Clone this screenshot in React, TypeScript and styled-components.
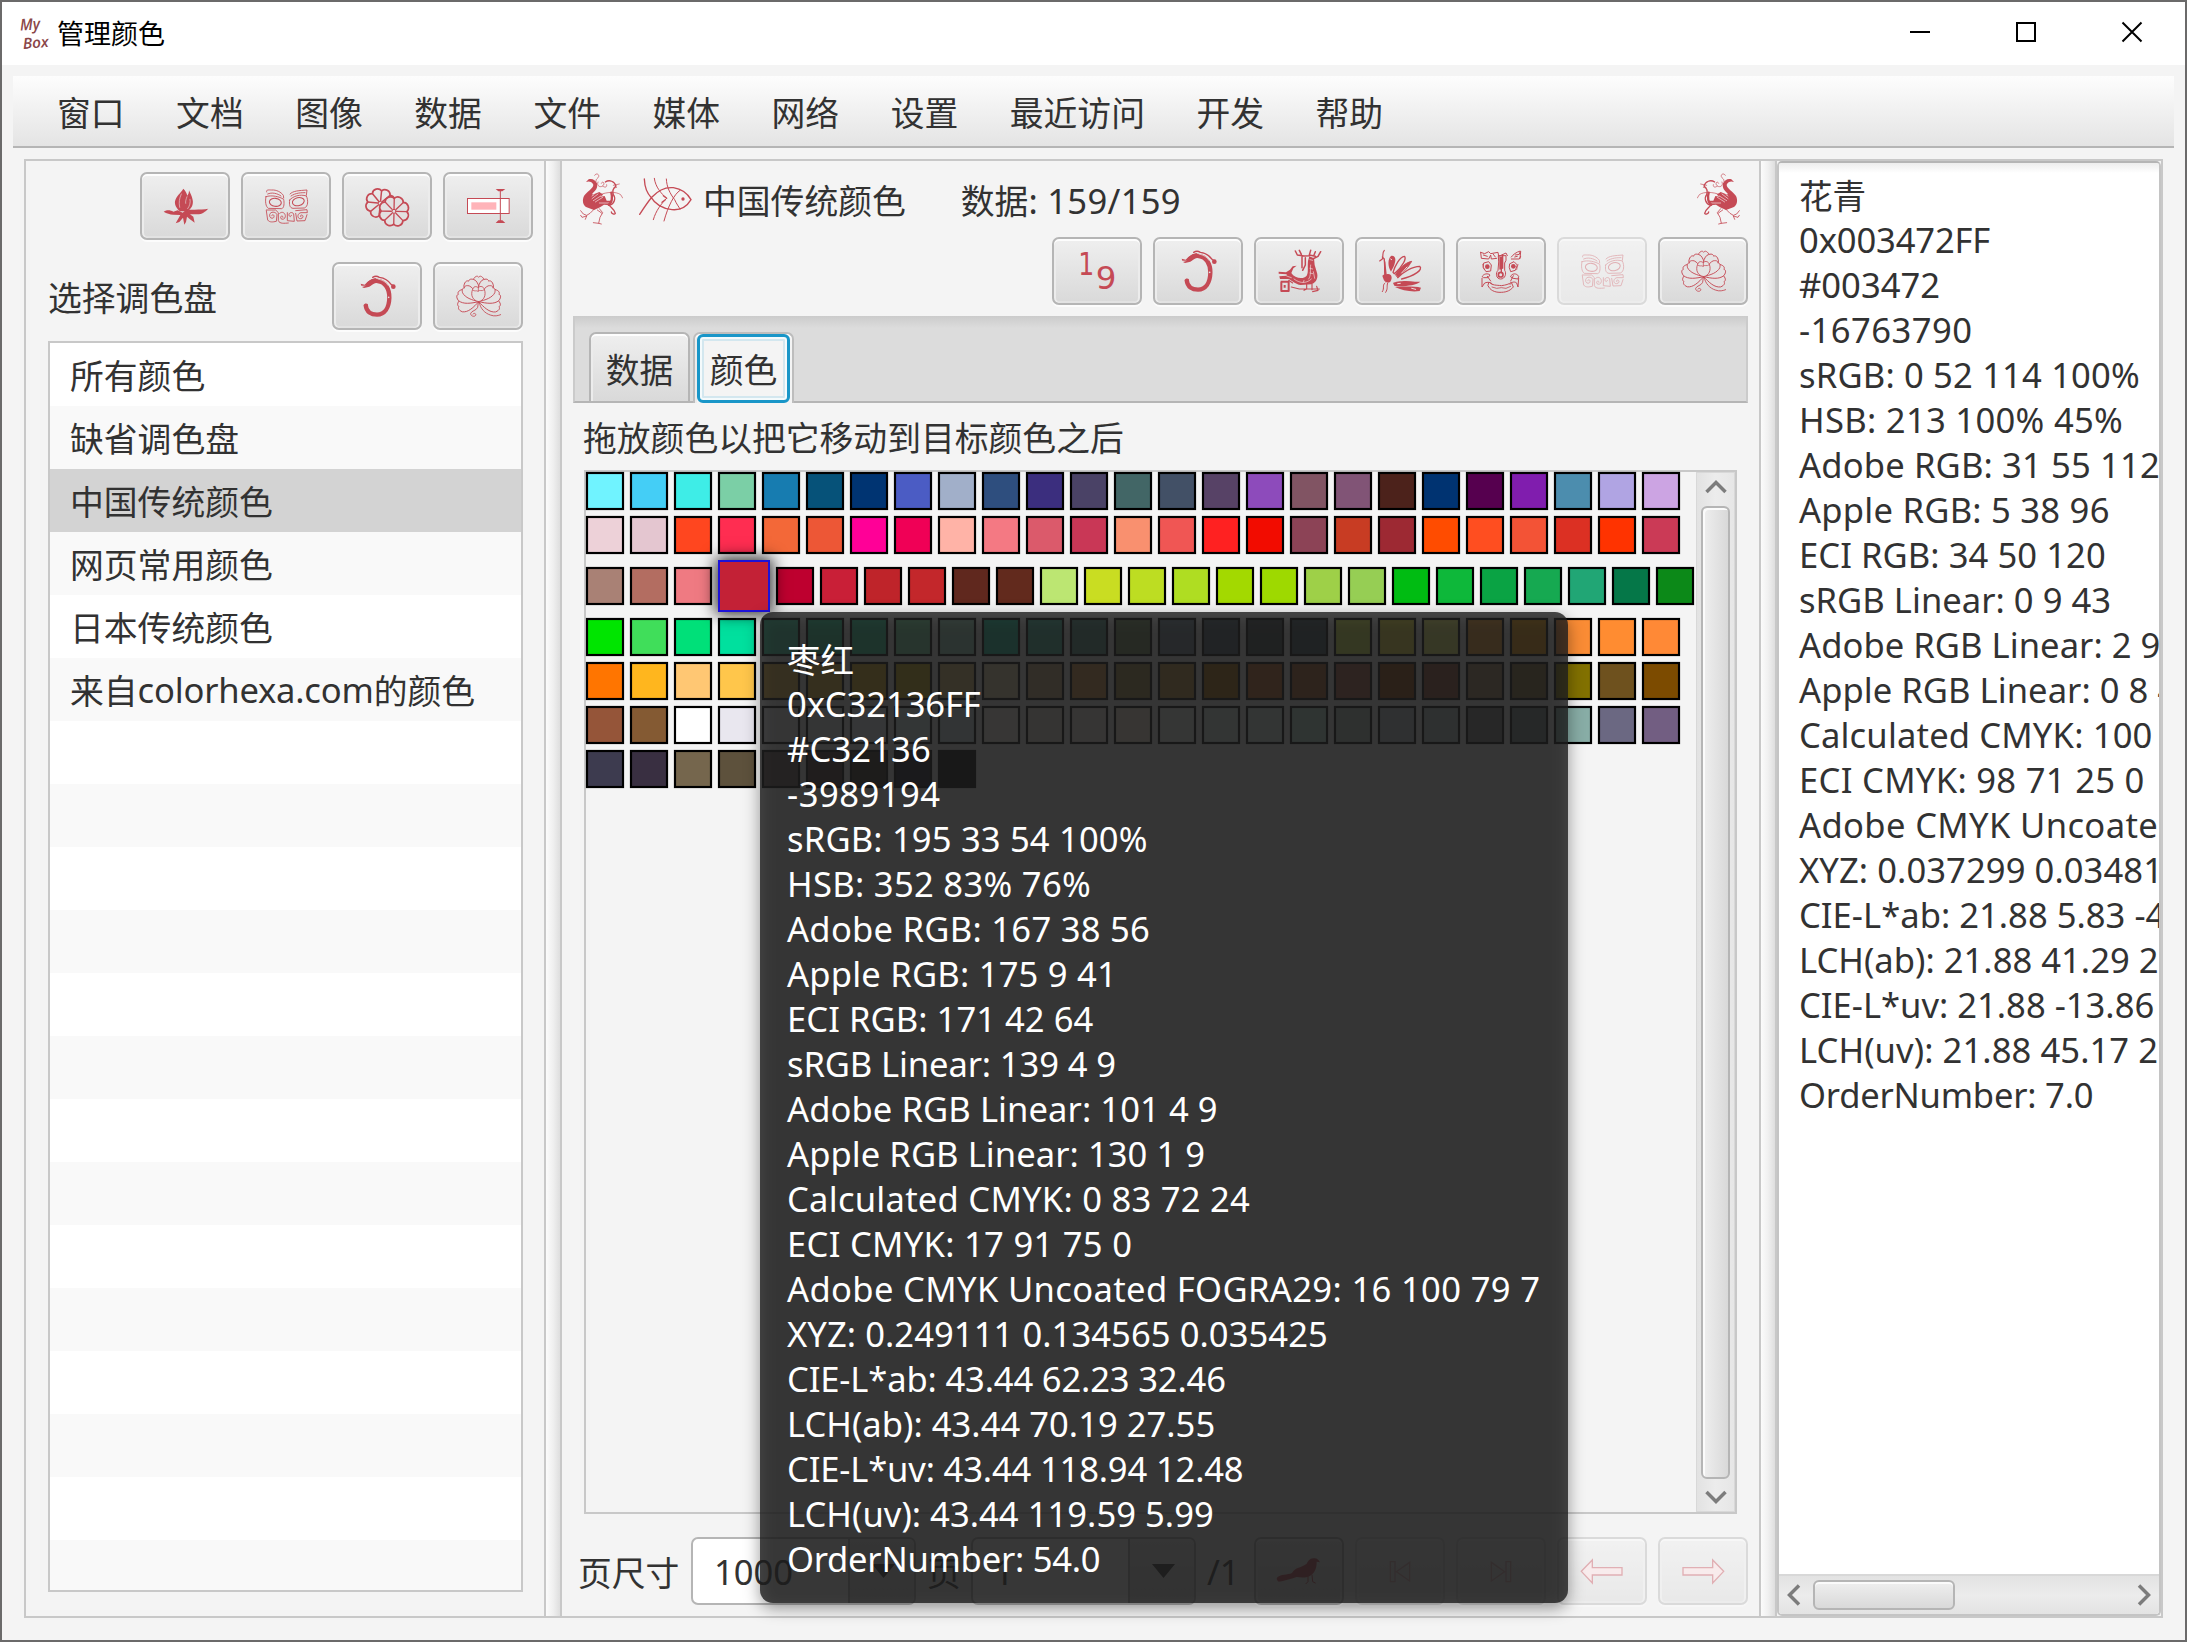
import React from "react";
import styled, { createGlobalStyle, css } from "styled-components";

const RED = "#c54a55";

const GlobalStyle = createGlobalStyle`
  * { box-sizing: border-box; }
  html, body { margin: 0; padding: 0; background: #f4f4f4; }
  body {
    font-family: "Noto Sans", "Noto Sans CJK SC", sans-serif;
    font-size: 33.8px;
    color: #323232;
    overflow: hidden;
  }
`;

/* ---------- window frame ---------- */

const Window = styled.div`
  position: relative;
  width: 2187px;
  height: 1642px;
  border: 2px solid #6b6a6a;
  background: #f4f4f4;
  display: flex;
  flex-direction: column;
  overflow: hidden;
`;

const TitleBar = styled.header`
  height: 63px;
  background: #fff;
  display: flex;
  align-items: center;
  padding: 0 41px 0 17px;
  flex: none;
`;

const Title = styled.h1`
  margin: -3px 0 0 4px;
  font-size: 27px;
  font-weight: 400;
  color: #000;
  flex: 1;
`;

const WindowControls = styled.div`
  display: flex;
  gap: 82px;
  margin-top: -4px;
`;

const MenuBar = styled.nav`
  margin: 11px 11px 0;
  height: 72px;
  flex: none;
  display: flex;
  align-items: center;
  gap: 51.5px;
  padding: 1px 44px 0;
  background: linear-gradient(#fdfdfd, #e4e4e4);
  border-bottom: 2px solid #b5b5b5;
`;

const MenuItem = styled.span`
  white-space: nowrap;
`;

const SplitPane = styled.main`
  margin: 11px 22px 22px;
  flex: 1;
  min-height: 0;
  display: flex;
  border: 2px solid #c8c8c8;
`;

const Divider = styled.div`
  width: 18px;
  flex: none;
  border-left: 2px solid #c8c8c8;
  border-right: 2px solid #c8c8c8;
  background: linear-gradient(90deg, #fbfbfb, #f0f0f0 50%, #dedede);
`;

/* ---------- shared controls ---------- */

const Button = styled.button<{ $disabled?: boolean }>`
  width: 90px;
  height: 68px;
  flex: none;
  padding: 0;
  border: 2px solid #b5b5b5;
  border-radius: 7px;
  background: linear-gradient(#efefef, #d9d9d9);
  box-shadow: inset 0 2px 0 #fdfdfd, inset 2px 0 0 #ececec, inset -2px 0 0 #ececec,
    inset 0 -2px 0 #e2e2e2, 0 2px 0 #fcfcfc;
  display: block;
  opacity: ${(p) => (p.$disabled ? 0.4 : 1)};
  svg {
    display: block;
    width: 90px;
    height: 68px;
    margin: -2px;
  }
`;

const Toolbar = styled.div`
  display: flex;
  gap: 11px;
  align-items: center;
`;

const Latin = styled.span<{ $ls?: number }>`
  font-size: 34.6px;
  letter-spacing: ${(p) => p.$ls ?? 0}px;
`;

/* ---------- palettes ---------- */

const PalettePane = styled.section`
  width: 518px;
  flex: none;
  display: flex;
  flex-direction: column;
  padding: 11px 11px 24px 22px;
`;

const PaletteTools = styled(Toolbar)`
  justify-content: flex-end;
`;

const PaletteHeader = styled(Toolbar)`
  margin: 22px 10px 11px 0;
`;

const PaletteLabel = styled.label`
  flex: 1;
  padding-top: 1px;
`;

const PaletteList = styled.ul`
  list-style: none;
  margin: 0 10px 0 0;
  padding: 0;
  flex: 1;
  min-height: 0;
  overflow: hidden;
  border: 2px solid #c8c8c8;
  background: #fff;
`;

const PaletteRow = styled.li<{ $selected?: boolean }>`
  height: 63px;
  padding: 0 0 0 20px;
  display: flex;
  align-items: center;
  white-space: pre;
  background: #fff;
  &:nth-child(even) {
    background: #f9f9f9;
  }
  ${(p) =>
    p.$selected &&
    css`
      && {
        background: #d3d3d3;
      }
    `}
`;

/* ---------- colours ---------- */

const ColorsPane = styled.section`
  width: 1197px;
  flex: none;
  display: flex;
  flex-direction: column;
  padding: 0 11px 0 11px;
`;

const InfoRow = styled.div`
  height: 76px;
  display: flex;
  align-items: center;
  padding: 0 8px 0 7px;
`;

const InfoIcon = styled.svg<{ $w: number; $h: number; $gap?: number }>`
  width: ${(p) => p.$w}px;
  height: ${(p) => p.$h}px;
  margin-left: ${(p) => p.$gap ?? 0}px;
  flex: none;
`;

const TableName = styled.span`
  margin: 0 55px 0 11px;
`;

const Counter = styled.span`
  flex: 1;
  white-space: pre;
`;

const DataTools = styled(Toolbar)`
  justify-content: flex-end;
`;

const TabHeader = styled.div`
  margin-top: 11px;
  height: 87px;
  flex: none;
  display: flex;
  align-items: flex-end;
  gap: 3px;
  padding: 0 14px;
  background: linear-gradient(#cbcbcb, #dcdcdc 12px);
  border: 2px solid #cbcbcb;
  border-top: 0;
  border-bottom: 2px solid #b5b5b5;
`;

const Tab = styled.div<{ $active?: boolean }>`
  width: 101px;
  height: 69px;
  padding-top: 2px;
  display: flex;
  align-items: center;
  justify-content: center;
  border: 2px solid #b5b5b5;
  border-bottom: 0;
  border-radius: 7px 7px 0 0;
  background: linear-gradient(#efefef, #d9d9d9);
  box-shadow: inset 0 2px 0 #fdfdfd, inset 2px 0 0 #ececec;
  ${(p) =>
    p.$active &&
    css`
      height: 71px;
      margin-bottom: -2px;
      padding: 0 2px;
      background: #f4f4f4;
      border-color: #bdbdbd;
    `}
`;

const FocusRing = styled.div`
  width: 100%;
  height: 100%;
  display: flex;
  align-items: center;
  justify-content: center;
  border: 3px solid #1996c8;
  border-radius: 6px;
  box-shadow: inset 0 0 0 2px #f4fafc, inset 0 0 0 4px #d3e7ef;
`;

const DragHint = styled.p`
  margin: 0;
  height: 67px;
  line-height: 70px;
  padding-left: 10px;
`;

const SwatchScroll = styled.div`
  margin: 0 11px;
  width: 1153px;
  height: 1044px;
  flex: none;
  display: flex;
  border: 2px solid #c8c8c8;
`;

const SwatchArea = styled.div`
  flex: 1;
  display: flex;
  flex-direction: column;
  gap: 6px;
`;

const SwatchRow = styled.div`
  display: flex;
  align-items: center;
  gap: 6px;
`;

const Swatch = styled.div<{ $color: string; $hover?: boolean }>`
  width: 38px;
  height: 38px;
  flex: none;
  background: ${(p) => p.$color};
  border: 2px solid #000;
  box-shadow: 0 0 1px rgba(0, 0, 0, 0.6), inset 0 0 1px rgba(0, 0, 0, 0.8);
  ${(p) =>
    p.$hover &&
    css`
      width: 52px;
      height: 52px;
      border: 2px solid #1d12d8;
      box-shadow: 0 0 15px 2px rgba(0, 0, 0, 0.85);
      z-index: 1;
    `}
`;

const VScroll = styled.div`
  width: 39px;
  flex: none;
  display: flex;
  flex-direction: column;
  align-items: center;
  justify-content: space-between;
  border: 1px solid #d8d8d8;
  background: linear-gradient(90deg, #e2e2e2, #ececec 50%, #e6e6e6);
  padding: 7px 0;
`;

const VThumb = styled.div`
  width: 29px;
  height: 973px;
  border: 2px solid #b5b5b5;
  border-radius: 6px;
  background: linear-gradient(90deg, #efefef, #d9d9d9);
  box-shadow: inset 2px 2px 0 #fbfbfb;
`;

const PageBar = styled.div`
  margin-top: 23px;
  display: flex;
  align-items: center;
  padding-left: 5px;
`;

const PageLabel = styled.span<{ $w: number }>`
  width: ${(p) => p.$w}px;
  flex: none;
  padding-top: 1px;
  white-space: nowrap;
`;

const Combo = styled.div`
  width: 225px;
  height: 68px;
  margin-right: 11px;
  flex: none;
  display: flex;
  border: 2px solid #b5b5b5;
  border-radius: 7px;
  background: #fff;
  overflow: hidden;
`;

const ComboValue = styled.div`
  flex: 1;
  padding: 0 0 0 21px;
  display: flex;
  align-items: center;
  font-size: 34.6px;
`;

const ComboArrow = styled.div`
  width: 66px;
  padding-left: 3px;
  display: flex;
  align-items: center;
  justify-content: center;
  border-left: 2px solid #b5b5b5;
  background: linear-gradient(#efefef, #d9d9d9);
`;

/* ---------- details ---------- */

const DetailPane = styled.aside`
  flex: 1;
  min-width: 0;
  display: flex;
  flex-direction: column;
  border: 2px solid #c4c4c4;
  border-top-color: #b5b5b5;
  border-radius: 5px;
  background: #fff;
  overflow: hidden;
`;

const DetailText = styled.div`
  flex: 1;
  padding: 10px 0 0 20px;
  overflow: hidden;
  background: linear-gradient(#ededed, #fff 10px);
`;

const Line = styled.div<{ $ls: number }>`
  height: 45px;
  line-height: 43px;
  white-space: pre;
  font-size: 34.6px;
  letter-spacing: ${(p) => p.$ls}px;
`;

const NameLine = styled.div`
  height: 45px;
  line-height: 46px;
  font-size: 33.6px;
`;

const HScroll = styled.div`
  height: 40px;
  flex: none;
  display: flex;
  align-items: center;
  padding: 0 8px;
  border-top: 2px solid #d8d8d8;
  background: linear-gradient(#e2e2e2, #ececec 50%, #e3e3e3);
`;

const HThumb = styled.div`
  width: 142px;
  height: 30px;
  margin: 0 auto 0 12px;
  border: 2px solid #b5b5b5;
  border-radius: 6px;
  background: linear-gradient(#efefef, #d9d9d9);
  box-shadow: inset 0 2px 0 #fbfbfb;
`;

/* ---------- tooltip ---------- */

const Tooltip = styled.div`
  position: absolute;
  left: 758px;
  top: 610px;
  width: 808px;
  height: 991px;
  padding: 25px 28px 20px 27px;
  color: #fff;
  z-index: 5;
  isolation: isolate;
  &::before,
  &::after {
    content: "";
    position: absolute;
    inset: 0;
    border-radius: 13px;
  }
  &::before {
    background: rgba(0, 0, 0, 0.4);
    transform: translateY(5px);
    filter: blur(8px);
    z-index: -2;
  }
  &::after {
    background: rgba(30, 30, 30, 0.8);
    z-index: -1;
  }
`;

/* ---------- drawings ---------- */

const Draw = ({ children }: { children: React.ReactNode }) => (
  <svg viewBox="0 0 270 204" fill="none" stroke={RED} strokeWidth={3} strokeLinecap="round" strokeLinejoin="round">
    {children}
  </svg>
);

const LotusBud = () => (
  <Draw>
    <g fill={RED} stroke="none">
      <path d="M130 50C121 64 109 72 105 88C103 101 112 112 120 118L143 118C154 110 161 98 158 84C156 72 150 62 147 55C147 63 145 67 142 71C140 62 136 56 130 50Z" />
      <path d="M71 119C84 112 92 116 100 119L113 115L128 122L134 117L150 113L164 113C180 112 192 112 205 110C196 119 186 127 172 127L150 127L160 134L164 152L149 141L141 134L138 150L133 158L129 137L118 150L107 154L116 138L121 129L100 128C90 127 80 124 71 119Z" />
    </g>
    <path d="M124 66C118 80 116 90 119 106M141 74C138 82 136 88 137 94M150 82C152 92 149 102 143 110" stroke="#e6cfd0" strokeWidth={2} />
  </Draw>
);

const MaskEyes = () => (
  <Draw>
    <g strokeWidth={2.6}>
      <path d="M77 60C74 52 84 54 92 54C106 53 120 60 127 70L128 78M80 66C92 60 110 64 120 72" />
      <path d="M75 74C72 88 74 104 82 109L122 110C130 108 130 92 128 82C116 74 92 68 75 74Z" />
      <ellipse cx="103" cy="91" rx="18" ry="12" transform="rotate(8 103 91)" strokeWidth={3.2} />
      <path d="M147 66C156 56 174 56 198 54L196 70M150 72C164 62 182 62 192 62" />
      <path d="M146 84C144 98 146 108 156 109L190 108C202 104 202 84 196 72C178 66 156 72 146 84Z" />
      <ellipse cx="172" cy="89" rx="18" ry="12" transform="rotate(-14 172 89)" strokeWidth={3.2} />
      <path d="M76 116L80 144C86 152 96 150 106 148L108 128C104 118 88 118 86 128C84 140 98 142 99 134C100 128 94 126 92 131" />
      <path d="M76 114L104 114L112 122L112 146C116 156 130 154 142 153" />
      <path d="M116 124C124 116 134 124 133 134C132 144 118 144 119 136C120 130 127 131 126 136" />
      <path d="M139 122L139 146L160 148L158 126C154 118 142 122 144 130C146 136 152 134 151 130" />
      <path d="M164 116L198 113L199 122L180 122C168 124 168 140 178 140C188 140 188 130 182 129C178 129 177 134 180 135" />
      <path d="M198 128L192 146L168 147L164 124" />
    </g>
  </Draw>
);

const blossomPoints = (cx: number, cy: number, r: number, phase: number, n = 8) => {
  const at = (a: number, k: number) => [cx + Math.cos(a) * r * k, cy + Math.sin(a) * r * k];
  const step = (Math.PI * 2) / n;
  let outline = "";
  const rays: string[] = [];
  for (let i = 0; i < n; i++) {
    const a = phase + i * step;
    const p = at(a, 0.86);
    const q = at(a + step, 0.86);
    const rr = r * 0.36;
    outline += i === 0 ? `M${p[0]} ${p[1]}` : "";
    outline += `A${rr} ${rr} 0 0 1 ${q[0]} ${q[1]}`;
    const s = at(a, 0.18);
    rays.push(`M${s[0]} ${s[1]}L${p[0]} ${p[1]}`);
  }
  return { outline: outline + "Z", rays: rays.join("") };
};

const Blossoms = () => {
  const back = blossomPoints(115, 94, 44, 0.1);
  const front = blossomPoints(156, 118, 45, 0.02);
  return (
    <Draw>
      <path d={back.outline} strokeWidth={5} />
      <path d={back.rays} strokeWidth={4.5} />
      <circle cx="115" cy="94" r="6" />
      <path d={front.outline} strokeWidth={5} fill="#e3e0e0" />
      <path d={front.rays} strokeWidth={4} />
      <circle cx="156" cy="118" r="6" />
    </Draw>
  );
};

const Rename = () => (
  <Draw>
    <rect x="73.5" y="79.5" width="125" height="45" fill="#fff" strokeLinejoin="miter" />
    <rect x="85" y="91" width="75" height="22" fill="#ffb4b9" stroke="none" />
    <path d="M172 52V152" strokeLinecap="butt" />
    <path d="M158 51H187L178 58H166ZM158 153H187L178 145H166Z" fill={RED} stroke="none" />
  </Draw>
);

const JadeDragon = () => (
  <Draw>
    <path d="M101 129C103 150 118 158 135 158C158 157 171 138 172 108C173 82 160 59 137 57C124 56 116 60 110 66" strokeWidth={13} strokeLinecap="butt" />
    <path d="M95 129C97 124 104 123 108 127L106 134L97 136Z" fill={RED} stroke="none" />
    <path d="M86 65L98 68L106 60L118 52L130 48L140 56L124 66L112 74L96 78L90 75L102 71L88 71Z" fill={RED} stroke="none" />
    <path d="M122 46C128 42 136 42 142 46C158 48 170 56 178 68L186 72" strokeWidth={4} />
    <circle cx="184" cy="74" r="7" fill={RED} stroke="none" />
    <path d="M138 51C152 54 162 60 168 70" stroke="#ececec" strokeWidth={2} />
    <circle cx="170" cy="106" r="2.5" fill="#e8e8e8" stroke="none" />
  </Draw>
);

/* angle, length and half-width of each petal, back to front */
const petals: [number, number, number][] = [
  [0, 77, 21],
  [-26, 72, 24],
  [26, 72, 24],
  [-104, 64, 22],
  [104, 66, 22],
  [-70, 68, 22],
  [70, 68, 22],
  [-46, 62, 18],
  [46, 62, 18],
];

const Peony = () => (
  <Draw>
    <g strokeWidth={2.6} fill="#e5e3e3">
      {petals.map(([a, l, w]) => (
        <path
          key={a}
          transform={`translate(137 119) rotate(${a})`}
          d={`M0 0C${-w * 0.6} ${-l * 0.3} ${-w * 1.1} ${-l * 0.6} ${-w * 0.8} ${-l * 0.86}C${-w * 0.4} ${-l * 1.04} ${-w * 0.1} ${-l} 0 ${-l * 0.95}C${w * 0.1} ${-l} ${w * 0.4} ${-l * 1.04} ${w * 0.8} ${-l * 0.86}C${w * 1.1} ${-l * 0.6} ${w * 0.6} ${-l * 0.3} 0 0Z`}
        />
      ))}
      <path d="M137 119C118 116 112 98 119 82C123 70 132 74 136 77C142 70 152 74 154 82C160 98 154 116 137 119Z" />
    </g>
    <path d="M119 84C124 90 130 84 135 88C140 82 146 90 154 83M136 77V87" strokeWidth={2.2} />
    <path d="M136 121L134 136C130 146 116 146 113 154C112 162 124 166 128 160C130 154 122 152 120 156M139 122C142 140 156 154 172 159C184 164 196 161 203 158" strokeWidth={2.6} />
  </Draw>
);

const SortDigits = () => (
  <Draw>
    <g fill={RED} stroke="none" fontFamily="DejaVu Sans, sans-serif">
      <text x="79" y="114" fontSize="95" textLength="48" lengthAdjust="spacingAndGlyphs">1</text>
      <text x="131" y="156" fontSize="97" textLength="62" lengthAdjust="spacingAndGlyphs">9</text>
    </g>
  </Draw>
);

const BronzeBird = () => (
  <Draw>
    <path d="M74 104L96 106L108 98L116 88L128 86L118 94L112 108C122 124 148 128 158 116C164 106 160 92 162 72L166 58L180 64L182 84L188 104C194 120 188 136 172 142L140 144C124 142 116 132 104 126L78 126L76 118L98 116L98 112L74 110Z" fill={RED} stroke="none" />
    <path d="M80 134H104V162H82V134M92 144V152" strokeWidth={6} strokeLinecap="butt" />
    <path d="M104 130L116 138M112 150L136 156L196 156M158 142V156L150 160M174 142V158M176 164L192 160L188 148" strokeWidth={3.5} />
    <path d="M124 42L130 54L150 57L166 56M136 40L142 52M170 40L166 54L184 58M184 44L180 54M200 44L192 58L176 66M154 62V84L146 100M144 60L144 92" strokeWidth={4.5} />
    <path d="M168 68L176 70M170 84C168 100 172 116 164 126M178 104L182 124M120 126C140 142 160 138 172 126M150 130L148 136M98 117L112 122M168 94L176 96M168 108L176 110" stroke="#f0dcdd" strokeWidth={2} />
  </Draw>
);

const Peacock = () => (
  <Draw>
    <path d="M88 40C80 48 86 56 82 66L74 72M82 60L88 66C90 84 88 98 90 112" strokeWidth={3.5} />
    <path d="M86 64L91 74L95 112C110 108 114 124 106 134C98 140 88 136 84 122L82 116L88 112Z" fill={RED} stroke="none" />
    <path d="M90 138C80 146 90 152 82 164M98 138C94 148 100 154 92 166" strokeWidth={3} />
    <path d="M108 104C98 88 98 66 108 57C118 54 124 64 120 76C118 88 112 96 108 104Z" fill={RED} stroke="none" />
    <path d="M114 106C120 86 134 60 148 58C156 62 144 88 118 110Z" strokeWidth={4} />
    <path d="M122 112C132 96 148 78 170 73C160 90 148 104 128 120Z" fill={RED} />
    <path d="M128 122C144 106 172 88 194 88C206 98 176 118 140 126" strokeWidth={4} />
    <path d="M114 138C124 132 156 130 180 134L196 134C184 146 136 150 118 146Z" fill={RED} stroke="none" />
    <path d="M120 150C146 148 180 148 198 152L194 162C170 166 140 160 120 150Z" fill={RED} stroke="none" />
    <path d="M107 66L110 68M156 90L140 108M184 98L170 106M128 140L136 139M170 154L182 157" stroke="#efdcdc" strokeWidth={3} />
  </Draw>
);

const BeastFace = () => (
  <Draw>
    <g strokeWidth={3}>
      <path d="M74 46L86 50L98 44L104 50L126 46L128 58L150 48L154 56M74 46L76 64L98 66L104 54L106 66L122 64M82 54L94 58M112 52L118 60" />
      <path d="M166 60C172 52 180 46 193 42L190 52L178 54M194 58L190 66L166 66M194 44L192 64M176 60L184 58" />
      <path d="M128 56H150V70L146 78V100C152 108 148 126 134 126C120 126 118 108 126 100L128 76Z" />
      <path d="M132 60V96M140 54V94M136 60V104" strokeWidth={4} />
      <circle cx="134" cy="113" r="7" strokeWidth={5} />
      <path d="M84 78L98 74L106 84L104 102L90 104L82 92ZM162 80L174 74L184 84L178 100L164 104L160 92Z" />
      <path d="M80 82L84 96M186 82L182 98" strokeWidth={2} />
      <path d="M79 118C82 110 96 108 102 114L96 122H84ZM78 124V150L86 138C96 134 104 136 108 140M164 118C168 108 182 108 188 118L186 126L172 124ZM188 124L186 150L182 138C174 132 166 136 162 142" />
      <path d="M100 136C108 146 122 144 136 146C150 144 158 142 166 136L172 150C160 164 146 166 132 166C116 166 102 160 96 146Z" />
      <path d="M108 150L122 154L136 152L150 154L164 148" strokeWidth={2.5} />
      <path d="M94 118L104 132M172 116L164 132" />
    </g>
    <circle cx="94" cy="89" r="7" fill={RED} stroke="none" />
    <circle cx="172" cy="88" r="7" fill={RED} stroke="none" />
  </Draw>
);

const Sparrow = () => (
  <Draw>
    <path d="M71 120C80 112 100 114 114 108C122 90 144 92 158 80C162 74 166 64 178 64C188 62 194 68 198 76L188 74C188 92 184 104 172 114C160 124 140 122 128 120C110 126 90 132 74 134C68 130 66 124 71 120Z" fill={RED} stroke="none" />
    <path d="M162 118V134L156 140M174 114L176 134L184 138" />
  </Draw>
);

const PageArrow = ({ flip }: { flip?: boolean }) => (
  <Draw>
    <path d="M73 103L106 69V92H195V114H106V138Z" fill="#ffdfe1" strokeWidth={4} strokeLinejoin="miter" transform={flip ? "translate(270 0) scale(-1 1)" : undefined} />
  </Draw>
);

const PageEnd = ({ flip }: { flip?: boolean }) => (
  <Draw>
    <path d="M106 74H120V134H106ZM164 76V132L124 104Z" strokeWidth={4} strokeLinejoin="miter" transform={flip ? "translate(270 0) scale(-1 1)" : undefined} />
  </Draw>
);

const Phoenix = ({ flip }: { flip?: boolean }) => (
  <InfoIcon $w={43} $h={52} viewBox="24 39 129 156" fill="none" stroke={RED} strokeWidth={3} strokeLinecap="round" strokeLinejoin="round">
    <g transform={flip ? "translate(177 0) scale(-1 1)" : undefined}>
      <path d="M42 66L50 58C60 54 70 60 75 70C78 86 70 92 62 100C56 108 72 100 82 96L94 104L84 110L98 108L104 122H122L114 136L96 134L84 142L66 150L44 142C32 136 30 120 36 108C44 94 64 86 64 74C60 66 52 62 42 66Z" fill={RED} stroke="none" />
      <path d="M60 116L78 102M64 122L86 108M70 126L92 112M60 108L66 104M82 129L112 129" stroke="#f4e4e5" strokeWidth={2} />
      <path d="M68 46C72 38 82 42 80 50C78 56 70 56 72 64M78 66C72 80 88 84 94 76C100 68 90 62 88 70M92 78C98 84 106 82 104 74" strokeWidth={2} />
      <path d="M100 66C112 58 128 64 132 78C124 84 120 92 124 104C132 114 128 132 112 136C118 144 128 148 130 160C128 166 118 160 118 156" strokeWidth={4} />
      <path d="M118 98C122 112 120 128 110 134" strokeWidth={7} />
      <path d="M124 76L142 72M84 104C104 96 132 94 146 104L152 114M126 84L134 82" strokeWidth={2} />
      <path d="M66 148L54 160L44 166L34 162L26 152M44 168L40 178M44 168L30 172L26 166M82 146L92 158L84 172L80 190L64 188M80 190L88 192M76 150L90 160" strokeWidth={2.5} />
    </g>
  </InfoIcon>
);

const Fish = () => (
  <InfoIcon $w={53} $h={45} $gap={16} viewBox="201 54 159 135" fill="none" stroke={RED} strokeWidth={4} strokeLinecap="round">
    <path d="M203 166C216 146 228 128 240 114C262 90 284 84 304 86C330 90 348 106 357 122C344 144 322 154 300 152C272 150 248 134 238 116C226 104 218 84 217 60" />
    <path d="M247 58C250 84 268 104 284 118C268 134 252 154 244 182M283 60C284 84 294 104 308 122C314 136 320 142 324 150M324 94C306 106 288 142 276 186" strokeWidth={3} />
    <path d="M284 118L274 110M280 122L270 130" />
    <circle cx="333" cy="120" r="5" fill={RED} stroke="none" />
  </InfoIcon>
);

const Chevron = ({ rotate, w = 22, h = 14 }: { rotate: number; w?: number; h?: number }) => (
  <svg width={w} height={h} viewBox={`${-w / 2} ${-h / 2} ${w} ${h}`} fill="none" stroke="#7c7c7c" strokeWidth={3.5}>
    <path d="M-9.5 5L0 -4.5L9.5 5" transform={`rotate(${rotate})`} />
  </svg>
);

const Logo = () => (
  <svg width={34} height={36} viewBox="0 0 34 36" fill="#8a4648" fontFamily="Open Sans, sans-serif" fontStyle="italic" fontWeight={600}>
    <text x="1" y="14" fontSize="16" textLength="20" lengthAdjust="spacingAndGlyphs" transform="rotate(-3 10 10)">My</text>
    <text x="4" y="32" fontSize="15" textLength="26" lengthAdjust="spacingAndGlyphs" transform="rotate(-5 16 30)">Box</text>
  </svg>
);

/* ---------- data ---------- */

const menus = ["窗口", "文档", "图像", "数据", "文件", "媒体", "网络", "设置", "最近访问", "开发", "帮助"];

const swatches: string[][] = [
  "70f3ff 44cef6 3eede7 7bcfa6 177cb0 065279 003472 4b5cc4 a1afc9 2e4e7e 3b2e7e 4a4266 426666 425066 574266 8d4bbb 815463 815476 4c221b 003371 56004f 801dae 4c8dae b0a4e3 cca4e3",
  "edd1d8 e4c6d0 ff461f ff2d51 f36838 ed5736 ff0097 f00056 ffb3a7 f47983 db5a6b c93756 f9906f f05654 ff2121 f20c00 8c4356 c83c23 9d2933 ff4c00 ff4e20 f35336 dc3023 ff3300 cb3a56",
  "a98175 b36d61 ef7a82 c32136 be002f c91f37 bf242a c3272b 60281e 622a1d bce672 c9dd22 bddd22 afdd22 a3d900 9ed900 9ed048 96ce54 00bc12 0eb83a 0aa344 16a951 21a675 057748 0c8918",
  "00e500 40de5a 00e079 00e09e 3de1ad 2add9c 2edfa3 7fecad a4e2c6 1bd1a5 48c0a4 549688 789262 758a99 50616d 424c50 41555d eaff56 fff143 faff72 ffa631 ffa400 fa8c35 ff8c31 ff8936",
  "ff7500 ffb61e ffc773 ffc64b f2be45 f0c239 e9bb1d d9b611 eacd76 eedeb0 d3b17d e29c45 a78e44 c89b40 ae7000 ca6924 b25d25 b35c44 9b4400 9c5333 a88462 896c39 827100 6e511e 7c4b00",
  "955539 845a33 ffffff e9e7ef f0f0f4 e9f1f6 f0fcff e3f9fd d6ecf0 fffbf0 f2ecde fcefe8 fff2df f3f9f1 e0eee8 e0f0e9 c0ebd7 bbcdc5 c2ccd0 bacac6 808080 75878a 88ada6 6b6882 725e82",
  "3d3b4f 392f41 75664d 5d513c 665757 493131 312520 161823 000000",
].map((r) => r.split(" "));

type TextLine = [text: string, tracking: number];

const detail: TextLine[] = [
  ["0x003472FF", -0.15],
  ["#003472", 0],
  ["-16763790", 0.45],
  ["sRGB: 0 52 114 100%", 0.17],
  ["HSB: 213 100% 45%", 0.3],
  ["Adobe RGB: 31 55 112", 0.15],
  ["Apple RGB: 5 38 96", 0.24],
  ["ECI RGB: 34 50 120", 0.06],
  ["sRGB Linear: 0 9 43", 0.02],
  ["Adobe RGB Linear: 2 9 41", 0.04],
  ["Apple RGB Linear: 0 8 44", 0.04],
  ["Calculated CMYK: 100", 0.15],
  ["ECI CMYK: 98 71 25 0", 0.3],
  ["Adobe CMYK Uncoated", 0.35],
  ["XYZ: 0.037299 0.034813", 0.07],
  ["CIE-L*ab: 21.88 5.83 -40", 0.02],
  ["LCH(ab): 21.88 41.29 278", 0.02],
  ["CIE-L*uv: 21.88 -13.86", 0],
  ["LCH(uv): 21.88 45.17 252", 0.08],
  ["OrderNumber: 7.0", -0.22],
];

const tip: TextLine[] = [
  ["0xC32136FF", -0.1],
  ["#C32136", 0.1],
  ["-3989194", 0.5],
  ["sRGB: 195 33 54 100%", 0.16],
  ["HSB: 352 83% 76%", 0.3],
  ["Adobe RGB: 167 38 56", 0.26],
  ["Apple RGB: 175 9 41", 0.2],
  ["ECI RGB: 171 42 64", 0.04],
  ["sRGB Linear: 139 4 9", -0.13],
  ["Adobe RGB Linear: 101 4 9", 0.07],
  ["Apple RGB Linear: 130 1 9", 0.05],
  ["Calculated CMYK: 0 83 72 24", 0.24],
  ["ECI CMYK: 17 91 75 0", 0.28],
  ["Adobe CMYK Uncoated FOGRA29: 16 100 79 7", 0.34],
  ["XYZ: 0.249111 0.134565 0.035425", 0.06],
  ["CIE-L*ab: 43.44 62.23 32.46", -0.16],
  ["LCH(ab): 43.44 70.19 27.55", 0.02],
  ["CIE-L*uv: 43.44 118.94 12.48", -0.17],
  ["LCH(uv): 43.44 119.59 5.99", 0.03],
  ["OrderNumber: 54.0", -0.25],
];

const DownTriangle = () => (
  <svg width={24} height={14} viewBox="0 0 24 14">
    <path d="M0 0H23L11.5 14Z" fill="#323232" />
  </svg>
);

export default function App() {
  return (
    <>
      <GlobalStyle />
      <Window>
        <TitleBar>
          <Logo />
          <Title>管理颜色</Title>
          <WindowControls>
            <svg width={24} height={24} viewBox="0 0 24 24" stroke="#000" strokeWidth={2}><path d="M2 12H22" /></svg>
            <svg width={24} height={24} viewBox="0 0 24 24" stroke="#000" strokeWidth={2} fill="none"><path d="M3 3H21V21H3Z" /></svg>
            <svg width={24} height={24} viewBox="0 0 24 24" stroke="#000" strokeWidth={2}><path d="M2.5 2.5L21.5 21.5M21.5 2.5L2.5 21.5" /></svg>
          </WindowControls>
        </TitleBar>

        <MenuBar>
          {menus.map((m) => <MenuItem key={m}>{m}</MenuItem>)}
        </MenuBar>

        <SplitPane>
          <PalettePane>
            <PaletteTools>
              <Button><LotusBud /></Button>
              <Button><MaskEyes /></Button>
              <Button><Blossoms /></Button>
              <Button><Rename /></Button>
            </PaletteTools>
            <PaletteHeader>
              <PaletteLabel>选择调色盘</PaletteLabel>
              <Button><JadeDragon /></Button>
              <Button><Peony /></Button>
            </PaletteHeader>
            <PaletteList>
              <PaletteRow>所有颜色</PaletteRow>
              <PaletteRow>缺省调色盘</PaletteRow>
              <PaletteRow $selected>中国传统颜色</PaletteRow>
              <PaletteRow>网页常用颜色</PaletteRow>
              <PaletteRow>日本传统颜色</PaletteRow>
              <PaletteRow>来自<Latin $ls={-0.2}>colorhexa.com</Latin>的颜色</PaletteRow>
              {Array.from({ length: 14 }, (_, i) => <PaletteRow key={i} />)}
            </PaletteList>
          </PalettePane>

          <Divider />

          <ColorsPane>
            <InfoRow>
              <Phoenix />
              <Fish />
              <TableName>中国传统颜色</TableName>
              <Counter>数据<Latin $ls={0.3}>: 159/159</Latin></Counter>
              <Phoenix flip />
            </InfoRow>
            <DataTools>
              <Button><SortDigits /></Button>
              <Button><JadeDragon /></Button>
              <Button><BronzeBird /></Button>
              <Button><Peacock /></Button>
              <Button><BeastFace /></Button>
              <Button $disabled><MaskEyes /></Button>
              <Button><Peony /></Button>
            </DataTools>
            <TabHeader>
              <Tab>数据</Tab>
              <Tab $active><FocusRing>颜色</FocusRing></Tab>
            </TabHeader>
            <DragHint>拖放颜色以把它移动到目标颜色之后</DragHint>
            <SwatchScroll>
              <SwatchArea>
                {swatches.map((row, r) => (
                  <SwatchRow key={r}>
                    {row.map((c, i) => <Swatch key={i} $color={`#${c}`} $hover={r === 2 && i === 3} />)}
                  </SwatchRow>
                ))}
              </SwatchArea>
              <VScroll>
                <Chevron rotate={0} />
                <VThumb />
                <Chevron rotate={180} />
              </VScroll>
            </SwatchScroll>
            <PageBar>
              <PageLabel $w={113}>页尺寸</PageLabel>
              <Combo><ComboValue>1000</ComboValue><ComboArrow><DownTriangle /></ComboArrow></Combo>
              <PageLabel $w={44}>页</PageLabel>
              <Combo><ComboValue>1</ComboValue><ComboArrow><DownTriangle /></ComboArrow></Combo>
              <PageLabel $w={47}><Latin>/1</Latin></PageLabel>
              <Toolbar>
                <Button><Sparrow /></Button>
                <Button $disabled><PageEnd /></Button>
                <Button $disabled><PageEnd flip /></Button>
                <Button $disabled><PageArrow /></Button>
                <Button $disabled><PageArrow flip /></Button>
              </Toolbar>
            </PageBar>
          </ColorsPane>

          <Divider />

          <DetailPane>
            <DetailText>
              <NameLine>花青</NameLine>
              {detail.map(([t, ls]) => <Line key={t} $ls={ls}>{t}</Line>)}
            </DetailText>
            <HScroll>
              <Chevron rotate={-90} w={14} h={22} />
              <HThumb />
              <Chevron rotate={90} w={14} h={22} />
            </HScroll>
          </DetailPane>
        </SplitPane>

        <Tooltip>
          <NameLine>枣红</NameLine>
          {tip.map(([t, ls]) => <Line key={t} $ls={ls}>{t}</Line>)}
        </Tooltip>
      </Window>
    </>
  );
}
